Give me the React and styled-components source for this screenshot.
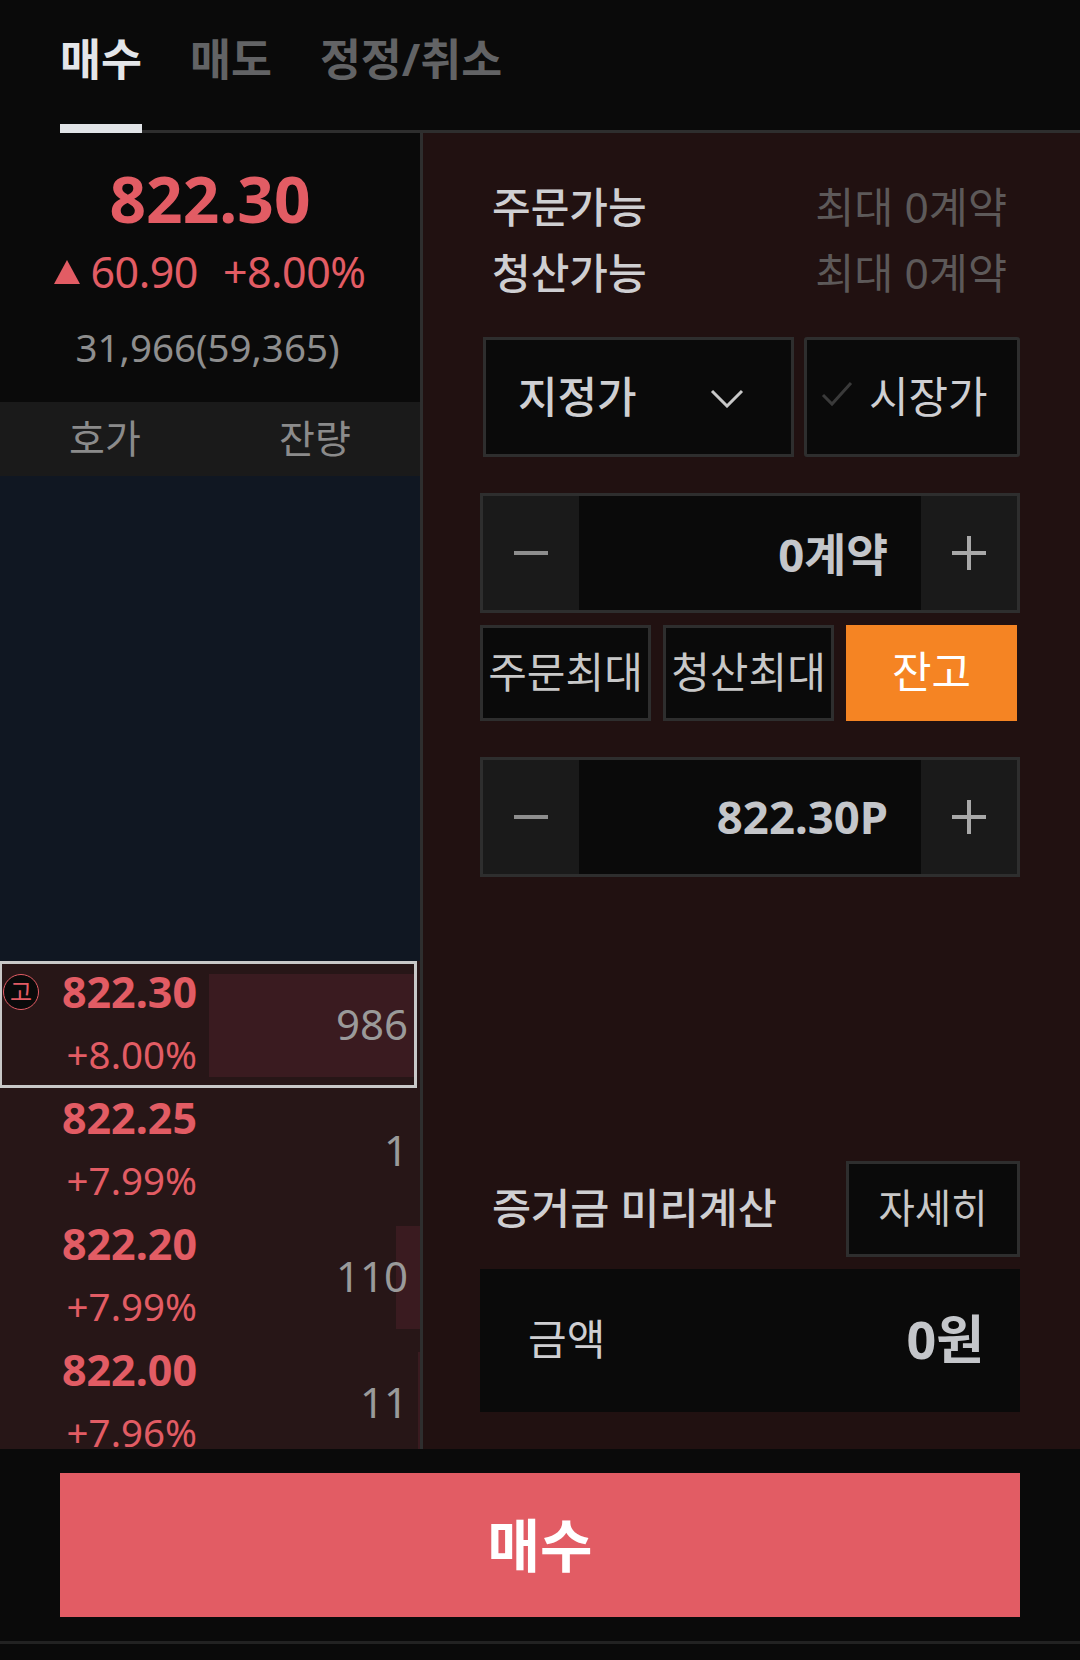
import React from 'react'
import styled, { createGlobalStyle } from 'styled-components'

const GlobalStyle = createGlobalStyle`
  html, body {
    margin: 0;
    padding: 0;
    background: #0a0a0a;
  }
  * {
    box-sizing: border-box;
  }
`

const RED = '#e25c64'

const Page = styled.div`
  width: 1080px;
  height: 1660px;
  display: flex;
  flex-direction: column;
  background: #0a0a0a;
  font-family: "Noto Sans", "Noto Sans CJK KR", sans-serif;
  overflow: hidden;
`

const TabBar = styled.div`
  height: 133px;
  flex: none;
  display: flex;
  padding-left: 60px;
`
const InactiveTabs = styled.div`
  flex: 1;
  display: flex;
  gap: 48px;
  padding-left: 48px;
  border-bottom: 3px solid #2e2e2e;
`
const Tab = styled.div`
  width: ${props => (props.$active ? '82px' : 'auto')};
  height: 133px;
  padding-top: 27px;
  font-size: 44.5px;
  line-height: 64px;
  font-weight: 700;
  white-space: nowrap;
  color: ${props => (props.$active ? '#e4e6e9' : '#626365')};
  border-bottom: ${props => (props.$active ? '9px solid #e1e4e7' : 'none')};
`

const Body = styled.div`
  height: 1316px;
  flex: none;
  display: flex;
`

const Quotes = styled.div`
  width: 423px;
  flex: none;
  display: flex;
  flex-direction: column;
  border-right: 3px solid #2e2e2e;
  overflow: hidden;
`
const Summary = styled.div`
  height: 269px;
  flex: none;
  display: flex;
  flex-direction: column;
  align-items: center;
  padding-top: 30px;
`
const BigPrice = styled.div`
  font-size: 64px;
  line-height: 72px;
  font-weight: 700;
  color: ${RED};
`
const ChangeRow = styled.div`
  display: flex;
  align-items: center;
  margin-top: 8px;
  font-size: 43px;
  line-height: 58px;
  letter-spacing: -0.5px;
  color: ${RED};
`
const UpMark = styled.span`
  width: 0;
  height: 0;
  margin-right: 10px;
  border-left: 13px solid transparent;
  border-right: 13px solid transparent;
  border-bottom: 24px solid ${RED};
`
const Rate = styled.span`
  margin-left: 25px;
`
const Volume = styled.div`
  margin: 20px 5px 0 0;
  font-size: 38.5px;
  line-height: 52px;
  color: #8e8e8e;
`
const QuoteHead = styled.div`
  height: 74px;
  flex: none;
  display: grid;
  grid-template-columns: 210px 1fr;
  background: #1a1a1a;
  font-size: 39px;
  line-height: 72px;
  color: #8b8b8b;
  text-align: center;
`
const AskSpace = styled.div`
  height: 485px;
  flex: none;
  background: #101722;
`
const BidSide = styled.div`
  flex: 1;
  min-height: 0;
  overflow: hidden;
  background: #271617;
`
const QuoteRow = styled.div`
  position: relative;
  height: ${props => (props.$current ? 127 : 126)}px;
  ${props => props.$current && 'width: 417px; border: 3px solid #c8c8c8; border-left-width: 2px;'}
`
const Bar = styled.div`
  position: absolute;
  right: 0;
  top: ${props => (props.$current ? 10 : 12)}px;
  height: 103px;
  background: #3a1b20;
`
const PriceCell = styled.div`
  position: absolute;
  right: ${props => (props.$current ? 217 : 223)}px;
  top: ${props => (props.$current ? -3 : -1)}px;
  text-align: right;
  white-space: nowrap;
`
const RowPrice = styled.div`
  font-size: 43px;
  line-height: 62px;
  font-weight: 700;
  color: ${RED};
`
const RowRate = styled.div`
  font-size: 38.5px;
  line-height: 63px;
  color: ${RED};
`
const Qty = styled.div`
  position: absolute;
  right: ${props => (props.$current ? 6 : 12)}px;
  top: ${props => (props.$current ? 32 : 34)}px;
  font-size: 42px;
  line-height: 56px;
  color: #9a9a9a;
`
const PriceBadge = styled.div`
  position: absolute;
  left: 1px;
  top: 10px;
  width: 36px;
  height: 36px;
  display: flex;
  align-items: center;
  justify-content: center;
  border: 1px solid ${RED};
  border-radius: 50%;
  background: #0a0a0a;
  font-size: 24px;
  line-height: 1;
  color: ${RED};
`

const OrderPanel = styled.div`
  flex: 1;
  display: flex;
  flex-direction: column;
  padding: 41px 60px 37px 57px;
  background: #211111;
`
const InfoRow = styled.div`
  display: flex;
  justify-content: space-between;
  height: 66px;
  padding: 0 13px 0 12px;
  font-size: 42px;
  line-height: 66px;
  font-weight: 500;
  color: #cfcfd2;
`
const InfoValue = styled.span`
  font-size: 42.5px;
  font-weight: 400;
  color: #5d5959;
`
const TypeRow = styled.div`
  display: flex;
  gap: 10px;
  margin: 31px 0 36px 3px;
`
const TypeBox = styled.div`
  height: 120px;
  display: flex;
  align-items: center;
  padding-bottom: 6px;
  background: #0a0a0a;
  border: 3px solid #2e2e2e;
  font-size: 43px;
  color: #cfcfd2;
`
const LimitBox = styled(TypeBox)`
  width: 311px;
  justify-content: space-between;
  padding-left: 32px;
  padding-right: 47px;
  font-weight: 500;
`
const MarketBox = styled(TypeBox)`
  width: 216px;
  padding-left: 14px;
  gap: 16px;
  border-radius: 3px;
`
const Stepper = styled.div`
  height: 120px;
  display: flex;
  background: #0a0a0a;
  border: 3px solid #2e2e2e;
`
const StepButton = styled.div`
  width: 96px;
  flex: none;
  display: flex;
  align-items: center;
  justify-content: center;
  background: #1a1a1a;
`
const StepValue = styled.div`
  flex: 1;
  padding-right: 33px;
  text-align: right;
  font-size: 45.5px;
  line-height: ${props => (props.$lifted ? 112 : 116)}px;
  font-weight: 700;
  color: #c4c6ca;
`
const QuickRow = styled.div`
  display: flex;
  gap: 12px;
  margin: 12px 0 36px 0;
`
const QuickButton = styled.div`
  width: 171px;
  height: 96px;
  display: flex;
  align-items: center;
  justify-content: center;
  padding-bottom: 8px;
  background: ${props => (props.$accent ? '#f58423' : '#0a0a0a')};
  border: ${props => (props.$accent ? 'none' : '3px solid #2e2e2e')};
  font-size: ${props => (props.$accent ? 43 : 42)}px;
  color: ${props => (props.$accent ? '#fff' : '#c8c8c8')};
  white-space: nowrap;
`
const MarginHead = styled.div`
  margin-top: auto;
  display: flex;
  align-items: center;
  justify-content: space-between;
  padding-left: 12px;
`
const MarginTitle = styled.div`
  padding-bottom: 8px;
  font-size: 42.5px;
  font-weight: 500;
  color: #cfcfd2;
`
const DetailButton = styled.div`
  width: 174px;
  height: 96px;
  display: flex;
  align-items: center;
  justify-content: center;
  padding-bottom: 6px;
  background: #0a0a0a;
  border: 3px solid #2e2e2e;
  font-size: 39.5px;
  color: #c8c8c8;
`
const AmountBox = styled.div`
  height: 143px;
  margin-top: 12px;
  display: flex;
  align-items: center;
  justify-content: space-between;
  padding: 0 36px 8px 48px;
  background: #0a0a0a;
`
const AmountLabel = styled.span`
  font-size: 42px;
  color: #cfcfd2;
`
const AmountValue = styled.span`
  font-size: 52px;
  font-weight: 700;
  color: #c4c6ca;
`

const Footer = styled.div`
  flex: 1;
  padding: 24px 60px 0;
`
const BuyButton = styled.div`
  height: 144px;
  display: flex;
  align-items: center;
  justify-content: center;
  padding-bottom: 6px;
  background: ${RED};
  font-size: 57px;
  font-weight: 700;
  color: #fff;
`
const FooterLine = styled.div`
  height: 3px;
  margin: 24px -60px 0;
  background: #222;
`
const ChevronSvg = styled.svg`
  margin-top: 8px;
`

const Chevron = () => (
  <ChevronSvg width="34" height="20" viewBox="0 0 34 20" fill="none">
    <path d="M2 3 L17 18 L32 3" stroke="#c8c8c8" strokeWidth="3" />
  </ChevronSvg>
)
const Check = () => (
  <svg width="32" height="26" viewBox="0 0 32 26" fill="none">
    <path d="M2 14 L11 23 L30 2" stroke="#3a3a3a" strokeWidth="3" />
  </svg>
)
const Minus = () => (
  <svg width="34" height="34" viewBox="0 0 34 34">
    <rect x="0" y="15" width="34" height="4" fill="#8e8e8e" />
  </svg>
)
const Plus = () => (
  <svg width="34" height="34" viewBox="0 0 34 34">
    <path d="M0 15h15V0h4v15h15v4H19v15h-4V19H0z" fill="#a8a8a8" />
  </svg>
)

const rows = [
  { price: '822.30', rate: '+8.00%', qty: '986', bar: 205, current: true },
  { price: '822.25', rate: '+7.99%', qty: '1', bar: 0 },
  { price: '822.20', rate: '+7.99%', qty: '110', bar: 24 },
  { price: '822.00', rate: '+7.96%', qty: '11', bar: 2 },
]

const App = () => {
  return (
    <Page>
      <GlobalStyle />
      <TabBar>
        <Tab $active>매수</Tab>
        <InactiveTabs>
          <Tab>매도</Tab>
          <Tab>정정/취소</Tab>
        </InactiveTabs>
      </TabBar>
      <Body>
        <Quotes>
          <Summary>
            <BigPrice>822.30</BigPrice>
            <ChangeRow>
              <UpMark />
              60.90
              <Rate>+8.00%</Rate>
            </ChangeRow>
            <Volume>31,966(59,365)</Volume>
          </Summary>
          <QuoteHead>
            <span>호가</span>
            <span>잔량</span>
          </QuoteHead>
          <AskSpace />
          <BidSide>
            {rows.map(row => (
              <QuoteRow key={row.price} $current={row.current}>
                {row.bar > 0 && <Bar $current={row.current} style={{ width: row.bar }} />}
                {row.current && <PriceBadge>고</PriceBadge>}
                <PriceCell $current={row.current}>
                  <RowPrice>{row.price}</RowPrice>
                  <RowRate>{row.rate}</RowRate>
                </PriceCell>
                <Qty $current={row.current}>{row.qty}</Qty>
              </QuoteRow>
            ))}
          </BidSide>
        </Quotes>
        <OrderPanel>
          <InfoRow>
            주문가능
            <InfoValue>최대 0계약</InfoValue>
          </InfoRow>
          <InfoRow>
            청산가능
            <InfoValue>최대 0계약</InfoValue>
          </InfoRow>
          <TypeRow>
            <LimitBox>
              지정가
              <Chevron />
            </LimitBox>
            <MarketBox>
              <Check />
              시장가
            </MarketBox>
          </TypeRow>
          <Stepper>
            <StepButton><Minus /></StepButton>
            <StepValue>0계약</StepValue>
            <StepButton><Plus /></StepButton>
          </Stepper>
          <QuickRow>
            <QuickButton>주문최대</QuickButton>
            <QuickButton>청산최대</QuickButton>
            <QuickButton $accent>잔고</QuickButton>
          </QuickRow>
          <Stepper>
            <StepButton><Minus /></StepButton>
            <StepValue $lifted>822.30P</StepValue>
            <StepButton><Plus /></StepButton>
          </Stepper>
          <MarginHead>
            <MarginTitle>증거금 미리계산</MarginTitle>
            <DetailButton>자세히</DetailButton>
          </MarginHead>
          <AmountBox>
            <AmountLabel>금액</AmountLabel>
            <AmountValue>0원</AmountValue>
          </AmountBox>
        </OrderPanel>
      </Body>
      <Footer>
        <BuyButton>매수</BuyButton>
        <FooterLine />
      </Footer>
    </Page>
  )
}

export default App
